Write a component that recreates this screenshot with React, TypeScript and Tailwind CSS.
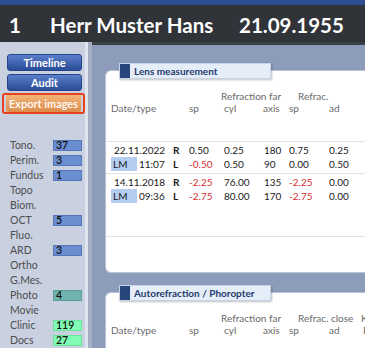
import React from 'react'

type Cell = { t: string; red?: boolean }

const sideItems: { label: string; count?: string; tone?: 'blue' | 'teal' | 'green' }[] = [
  { label: 'Tono.', count: '37', tone: 'blue' },
  { label: 'Perim.', count: '3', tone: 'blue' },
  { label: 'Fundus', count: '1', tone: 'blue' },
  { label: 'Topo' },
  { label: 'Biom.' },
  { label: 'OCT', count: '5', tone: 'blue' },
  { label: 'Fluo.' },
  { label: 'ARD', count: '3', tone: 'blue' },
  { label: 'Ortho' },
  { label: 'G.Mes.' },
  { label: 'Photo', count: '4', tone: 'teal' },
  { label: 'Movie' },
  { label: 'Clinic', count: '119', tone: 'green' },
  { label: 'Docs', count: '27', tone: 'green' },
]

const toneClass = {
  blue: 'bg-[#6b8ed0] border-[#5577b8]',
  teal: 'bg-[#70b2ac] border-[#5a9b95]',
  green: 'bg-[#82fdb5] border-[#6be29e]',
}

const measurements: { date: string; time: string; r: Cell[]; l: Cell[] }[] = [
  {
    date: '22.11.2022',
    time: '11:07',
    r: [{ t: '0.50' }, { t: '0.25' }, { t: '180' }, { t: '0.75' }, { t: '0.25' }],
    l: [{ t: '-0.50', red: true }, { t: '0.50' }, { t: '90' }, { t: '0.00' }, { t: '0.50' }],
  },
  {
    date: '14.11.2018',
    time: '09:36',
    r: [{ t: '-2.25', red: true }, { t: '76.00' }, { t: '135' }, { t: '-2.25', red: true }, { t: '0.00' }],
    l: [{ t: '-2.75', red: true }, { t: '80.00' }, { t: '170' }, { t: '-2.75', red: true }, { t: '0.00' }],
  },
]

const colW = ['w-[35px]', 'w-[40px]', 'w-[25px]', 'w-[40px]', 'w-[36px]']

function Values({ cells }: { cells: Cell[] }) {
  return (
    <>
      {cells.map((c, i) => (
        <span key={i} className={`${colW[i]} shrink-0 ${c.red ? 'text-[#d22f2f]' : 'text-[#1b1b1b]'}`}>
          {c.t}
        </span>
      ))}
    </>
  )
}

function SideButton({ label }: { label: string }) {
  return (
    <div className="h-[17px] w-[75px] rounded-[3px] border border-[#23448a] bg-gradient-to-b from-[#5a7fcb] to-[#2b4c96] flex items-center justify-center text-[11px] font-bold text-white leading-none">
      {label}
    </div>
  )
}

function PanelTab({ title }: { title: string }) {
  return (
    <div className="absolute left-[13px] top-[-8px] h-[16px] w-[152px] flex bg-[#e5edf9] border border-[#c6d3e6] shadow-[1px_1px_2px_rgba(0,0,0,0.25)]">
      <div className="w-[10px] h-full bg-[#28467b]" />
      <span className="pl-[4px] text-[10px] font-bold text-[#1f3a6c] leading-[14px]">{title}</span>
    </div>
  )
}

function HeaderRows({ close, lastX }: { close: string; lastX: string }) {
  return (
    <div className="pt-[19px] pl-[5px] text-[10px] text-[#6a6a6a] leading-[12px]">
      <div className="flex h-[12px] whitespace-nowrap">
        <span className="w-[110px] shrink-0" />
        <span className="w-[77px] shrink-0">Refraction far</span>
        <span className={`${lastX} shrink-0`}>{close}</span>
        <span>K</span>
      </div>
      <div className="flex h-[12px] whitespace-nowrap">
        <span className="w-[78px] shrink-0">Date/type</span>
        <span className="w-[35px] shrink-0">sp</span>
        <span className="w-[39px] shrink-0">cyl</span>
        <span className="w-[26px] shrink-0">axis</span>
        <span className="w-[40px] shrink-0">sp</span>
        <span className={close === 'Refrac.' ? 'w-[36px] shrink-0' : 'w-[34px] shrink-0'}>ad</span>
        <span>D</span>
      </div>
    </div>
  )
}

export default function App() {
  return (
    <div className="w-[365px] h-[348px] overflow-hidden flex flex-col font-[Lato,sans-serif] bg-[#8e9cbb]">
      {/* patient bar */}
      <div className="h-[42px] shrink-0 flex flex-col">
        <div className="h-[5px] bg-[#2c4f93]" />
        <div className="flex-1 bg-[#303338] flex items-center pt-[3px] text-[20.5px] font-bold text-white leading-none whitespace-nowrap">
          <span className="w-[50px] pl-[9px]">1</span>
          <span className="w-[189px]">Herr Muster Hans</span>
          <span>21.09.1955</span>
        </div>
      </div>

      <div className="flex flex-1 min-h-0">
        {/* sidebar */}
        <div className="w-[92px] shrink-0 flex">
          <div className="w-[85px] bg-[#c9d1e1] flex flex-col">
            <div className="pt-[12px] pl-[7px] flex flex-col gap-[3px]">
              <SideButton label="Timeline" />
              <SideButton label="Audit" />
            </div>
            <div className="ml-[2px] mt-[2px] w-[83px] h-[24px] rounded-[3px] border-2 border-[#e8421d] flex items-center justify-center">
              <div className="h-[17px] w-[75px] rounded-[2px] bg-gradient-to-b from-[#f2b47a] to-[#dc8c4b] flex items-center justify-center text-[11px] font-semibold text-white leading-none">
                Export images
              </div>
            </div>
            <div className="mt-[24px] flex flex-col">
              {sideItems.map((it) => (
                <div key={it.label} className="h-[15px] flex items-center">
                  <span className="w-[53px] pl-[10px] text-[10.5px] text-[#4d4d4d] leading-none">{it.label}</span>
                  {it.count && it.tone && (
                    <span
                      className={`w-[29px] h-[11px] border ${toneClass[it.tone]} text-[10.5px] font-semibold text-[#111] leading-[9px] pl-[2px]`}
                    >
                      {it.count}
                    </span>
                  )}
                </div>
              ))}
            </div>
          </div>
          <div className="w-[3px] bg-[#dfe5ef]" />
          <div className="w-[4px] bg-[#a5aec2]" />
        </div>

        {/* main */}
        <div className="flex-1 min-w-0 border-t-[3px] border-[#3b3f46] bg-[#8e9cbb] pl-[13px] pt-[25px] flex flex-col gap-[19px] overflow-hidden">
          <div className="relative h-[203px] shrink-0 bg-white rounded-l-[6px] border border-r-0 border-[#b9c3d6]">
            <PanelTab title="Lens measurement" />
            <HeaderRows close="Refrac." lastX="w-[67px]" />
            <div className="mt-[27px] text-[10px] leading-[14px]">
              {measurements.map((m) => (
                <div key={m.date} className="border-t border-[#e3e3e3] pt-[1px] pb-[2px]">
                  <div className="flex h-[14px] pl-[5px] whitespace-nowrap">
                    <span className="w-[62px] shrink-0 pl-[3px] text-[#1b1b1b]">{m.date}</span>
                    <span className="w-[16px] shrink-0 font-bold text-[#1b1b1b]">R</span>
                    <Values cells={m.r} />
                  </div>
                  <div className="flex h-[14px] pl-[5px] whitespace-nowrap">
                    <span className="w-[26px] shrink-0 bg-[#b5cdf1] pl-[2px] text-[#1b1b1b]">LM</span>
                    <span className="w-[36px] shrink-0 pl-[2px] text-[#1b1b1b]">{m.time}</span>
                    <span className="w-[16px] shrink-0 font-bold text-[#1b1b1b]">L</span>
                    <Values cells={m.l} />
                  </div>
                </div>
              ))}
              <div className="mt-[31px] border-t border-[#e3e3e3]" />
            </div>
          </div>

          <div className="relative flex-1 bg-white rounded-tl-[6px] border border-r-0 border-b-0 border-[#b9c3d6]">
            <PanelTab title="Autorefraction / Phoropter" />
            <HeaderRows close="Refrac. close" lastX="w-[63px]" />
          </div>
        </div>
      </div>
    </div>
  )
}
